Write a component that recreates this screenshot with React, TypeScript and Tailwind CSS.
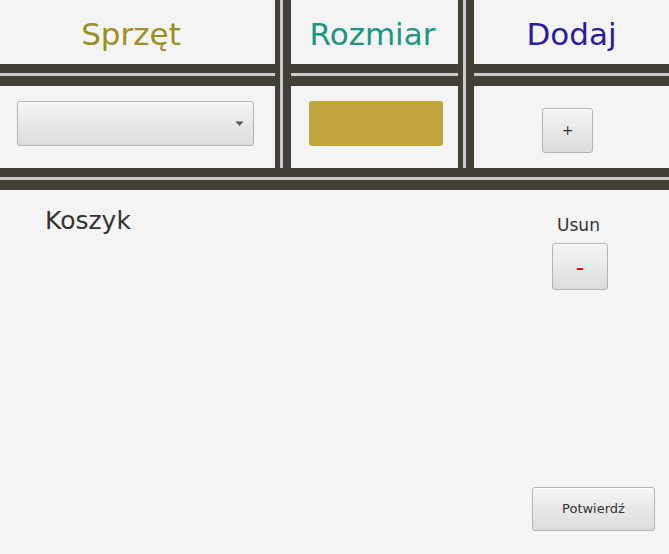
import React from "react";

const btn =
  "flex items-center justify-center rounded-[3px] border border-[#b4b4b4] bg-gradient-to-b from-[#f5f5f5] to-[#dcdcdc] shadow-[inset_0_1px_0_#ffffff]";

function VBar({ col }: { col: string }) {
  return (
    <div className={`${col} row-start-1 row-end-4 z-10 flex`}>
      <div className="w-[5px] bg-[#433f37]" />
      <div className="w-[3px] bg-[#cccccc]" />
      <div className="w-[8px] bg-[#433f37]" />
    </div>
  );
}

function HBar({ row }: { row: string }) {
  return (
    <div className={`${row} col-start-1 col-end-6 flex flex-col`}>
      <div className="h-[9px] bg-[#433f37]" />
      <div className="h-[3px] bg-[#cccccc]" />
      <div className="h-[10px] bg-[#433f37]" />
    </div>
  );
}

export default function App() {
  return (
    <div className="min-h-[554px] w-full bg-[#f4f4f4] font-['DejaVu_Sans',sans-serif] text-[#333333]">
      <div className="grid grid-cols-[275px_16px_167px_16px_1fr] grid-rows-[64px_22px_82px_22px]">
        <div className="col-start-1 row-start-1 flex items-center justify-center pr-[13px] pt-[4px] text-[31px] leading-[36px] text-[#9a8f1f]">
          Sprzęt
        </div>
        <div className="col-start-3 row-start-1 flex items-center justify-center pr-[4px] pt-[4px] text-[31px] leading-[36px] text-[#1c9681]">
          Rozmiar
        </div>
        <div className="col-start-5 row-start-1 flex items-center justify-center pt-[4px] text-[31px] leading-[36px] text-[#2b1ba1]">
          Dodaj
        </div>

        <HBar row="row-start-2" />
        <VBar col="col-start-2" />
        <VBar col="col-start-4" />

        <div className="col-start-1 row-start-3 pl-[17px] pt-[15px]">
          <div className={`${btn} h-[45px] w-[237px] justify-end pr-[9px]`}>
            <svg width="9" height="6" viewBox="0 0 9 6">
              <path d="M0.5 0.5 L8.5 0.5 L4.5 5 Z" fill="#555555" />
            </svg>
          </div>
        </div>
        <div className="col-start-3 row-start-3 pl-[18px] pt-[15px]">
          <div className="h-[45px] w-[134px] rounded-[3px] bg-[#c1a53c]" />
        </div>
        <div className="col-start-5 row-start-3 pl-[68px] pt-[22px]">
          <button className={`${btn} h-[45px] w-[51px] text-[14px] text-[#333333]`}>+</button>
        </div>

        <HBar row="row-start-4" />
      </div>

      <div className="flex h-[364px] flex-col">
        <div className="flex flex-1">
          <div className="pl-[45px] pt-[16px] text-[25px] leading-[29px] text-[#333333]">Koszyk</div>
          <div className="ml-auto mr-[61px] flex flex-col items-center pt-[25px]">
            <span className="pr-[3px] text-[17px] leading-[20px] text-[#333333]">Usun</span>
            <button className={`${btn} mt-[8px] h-[47px] w-[56px] pt-[2px] text-[24px] leading-[24px] text-[#d41414]`}>
              -
            </button>
          </div>
        </div>
        <div className="flex justify-end pb-[23px] pr-[14px]">
          <button className={`${btn} h-[44px] w-[123px] text-[13px] text-[#333333]`}>Potwierdź</button>
        </div>
      </div>
    </div>
  );
}
